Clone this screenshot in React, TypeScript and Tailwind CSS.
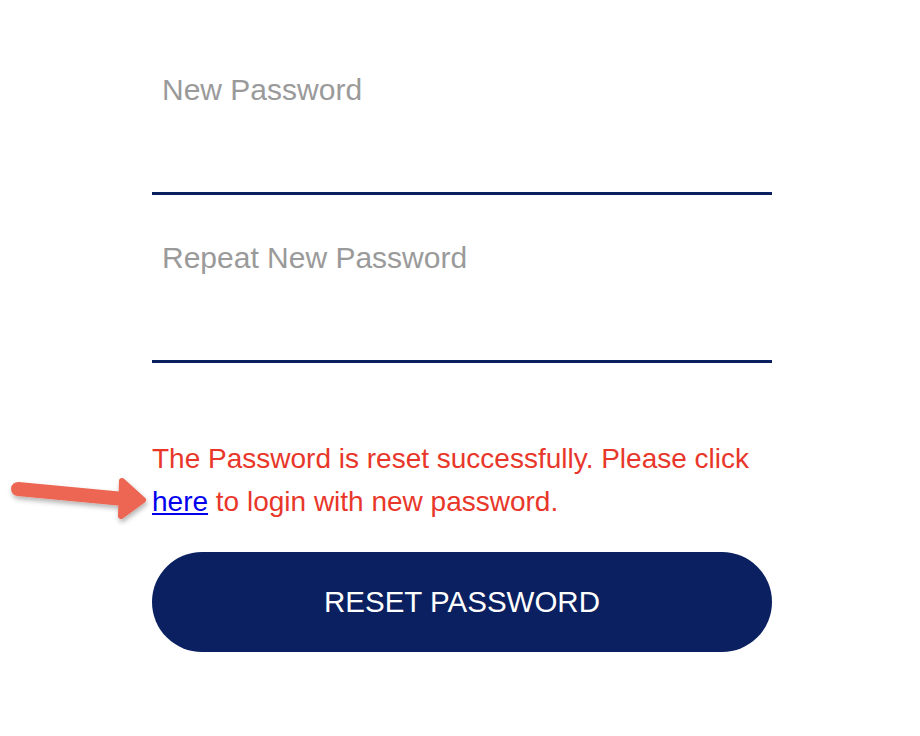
import React from 'react';

const font = { fontFamily: '"Liberation Sans", Arial, sans-serif' };

const Field = ({ label }: { label: string }) => (
  <div className="flex flex-col">
    <div className="h-[34px] pt-[1px] pl-[10px] text-[30px] leading-[34px] text-[#9a9a9a]">{label}</div>
    <div className="h-[86px]" />
    <div className="h-[3px] bg-[#0a2060]" />
  </div>
);

export default function App() {
  return (
    <div className="relative w-[920px] h-[736px] bg-white" style={font}>
      {/* callout arrow */}
      <svg className="absolute left-0 top-[470px]" width="160" height="60" viewBox="0 0 160 60">
        <defs>
          <filter id="sh" x="-20%" y="-40%" width="140%" height="180%">
            <feDropShadow dx="1" dy="3" stdDeviation="2.5" floodColor="#000" floodOpacity="0.3" />
          </filter>
        </defs>
        <g filter="url(#sh)" fill="#ec6653" stroke="#ec6653" strokeLinejoin="round" strokeLinecap="round">
          <line x1="18" y1="19" x2="124" y2="29" strokeWidth="14" />
          <polygon points="122,11 143,30 121,46" strokeWidth="6" />
        </g>
      </svg>

      <div className="flex flex-col w-[620px] ml-[152px] pt-[72px]">
        <Field label="New Password" />
        <div className="h-[45px]" />
        <Field label="Repeat New Password" />
        <p className="mt-[74px] text-[28px] leading-[43px] text-[#e8372a]">
          The Password is reset successfully. Please click{' '}
          <a href="#" className="text-[#0000ee] underline">here</a> to login with new password.
        </p>
        <button className="mt-[29px] h-[100px] rounded-full bg-[#0a2060] text-white text-[29.5px]">
          RESET PASSWORD
        </button>
      </div>
    </div>
  );
}
